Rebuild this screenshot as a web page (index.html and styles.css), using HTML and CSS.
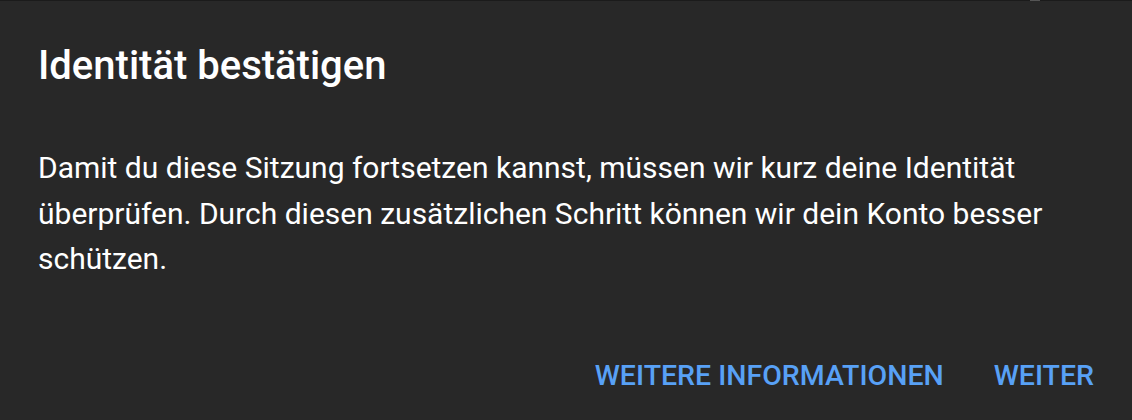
FILE: index.html
```html
<!DOCTYPE html>
<html lang="de">
<head>
    <meta charset="UTF-8">
    <meta name="viewport" content="width=device-width, initial-scale=1.0">
    <title>Identität bestätigen</title>
    <link rel="stylesheet" href="styles.css">
</head>
<body>
    <div class="dialog">
        <h1 class="dialog-title">Identität bestätigen</h1>
        <p class="dialog-text">Damit du diese Sitzung fortsetzen kannst, müssen wir kurz deine Identität überprüfen. Durch diesen zusätzlichen Schritt können wir dein Konto besser schützen.</p>
        <div class="dialog-actions">
            <button class="dialog-button">Weitere Informationen</button>
            <button class="dialog-button">Weiter</button>
        </div>
    </div>
</body>
</html>
```

FILE: styles.css
```css
html, body {
    margin: 0;
    padding: 0;
    background-color: #282828;
}
body {
    font-family: Roboto, "Noto Sans", Arial, sans-serif;
    color: #fff;
}
.dialog {
    position: relative;
    height: 419px;
    border-top: 1px solid #1b1b1b;
    padding: 0 38px 0 38px;
    display: flex;
    flex-direction: column;
}
.dialog::after {
    content: "";
    position: absolute;
    top: -1px;
    left: 1030px;
    width: 10px;
    height: 1px;
    background-color: #555;
}
.dialog-title {
    margin: 41px 0 0;
    font-size: 40px;
    line-height: 48px;
    font-weight: 500;
}
.dialog-text {
    margin: 55px 0 0;
    font-size: 30px;
    line-height: 45.5px;
    font-weight: 400;
}
.dialog-actions {
    margin-top: auto;
    margin-bottom: 26px;
    display: flex;
    justify-content: flex-end;
    gap: 50px;
}
.dialog-button {
    background: none;
    border: none;
    padding: 0;
    font-family: inherit;
    font-size: 28.5px;
    line-height: 36px;
    font-weight: 500;
    text-transform: uppercase;
    color: #58a1f6;
    cursor: pointer;
}
```
